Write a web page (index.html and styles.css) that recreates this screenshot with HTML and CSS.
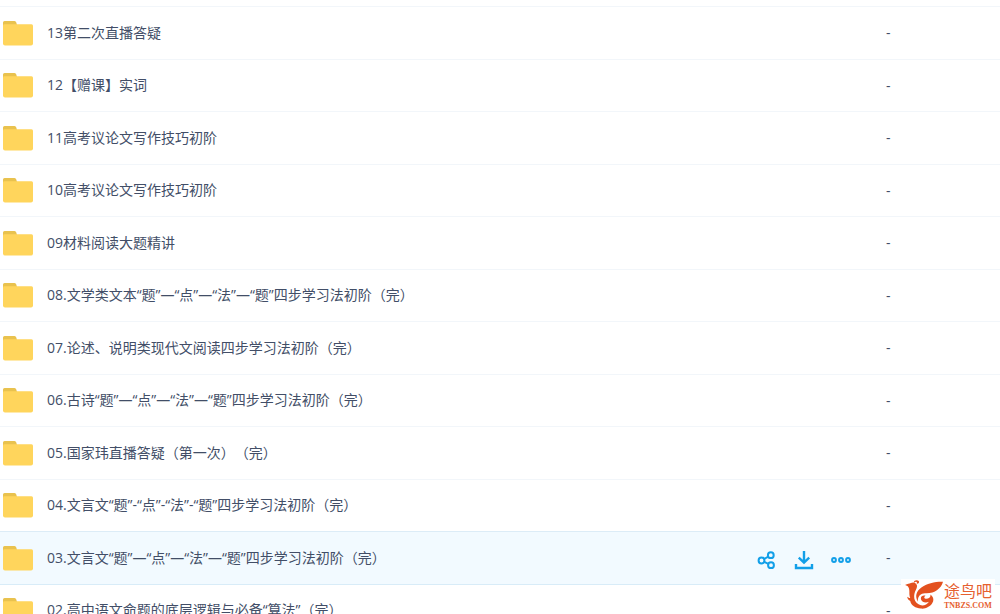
FILE: index.html
```html
<!DOCTYPE html>
<html lang="zh-CN">
<head>
<meta charset="utf-8">
<title>文件列表</title>
<link rel="stylesheet" href="styles.css">
</head>
<body>
<svg class="defs" aria-hidden="true">
  <symbol id="folder" viewBox="0 0 30 25">
    <path d="M0 8V1.500Q0 0 1.500 0H11.500Q13 0 13.300 1.500L14 4V8Z" fill="#e9c24e"/>
    <path d="M0 4.500Q0 3.300 1.500 3.300H28.500Q30 3.300 30 4.800V22.500Q30 24.500 28 24.500H2Q0 24.500 0 22.500Z" fill="#ffd55c"/>
  </symbol>
</svg>
<main class="files">
<table class="list">
<tbody>
<tr class="row"><td class="name"><svg class="folder"><use href="#folder"/></svg><a class="link" href="#">13第二次直播答疑</a></td><td class="actions"></td><td class="size">-</td></tr>
<tr class="row"><td class="name"><svg class="folder"><use href="#folder"/></svg><a class="link" href="#">12【赠课】实词</a></td><td class="actions"></td><td class="size">-</td></tr>
<tr class="row"><td class="name"><svg class="folder"><use href="#folder"/></svg><a class="link" href="#">11高考议论文写作技巧初阶</a></td><td class="actions"></td><td class="size">-</td></tr>
<tr class="row"><td class="name"><svg class="folder"><use href="#folder"/></svg><a class="link" href="#">10高考议论文写作技巧初阶</a></td><td class="actions"></td><td class="size">-</td></tr>
<tr class="row"><td class="name"><svg class="folder"><use href="#folder"/></svg><a class="link" href="#">09材料阅读大题精讲</a></td><td class="actions"></td><td class="size">-</td></tr>
<tr class="row"><td class="name"><svg class="folder"><use href="#folder"/></svg><a class="link" href="#">08.文学类文本“题”—“点”—“法”—“题”四步学习法初阶（完）</a></td><td class="actions"></td><td class="size">-</td></tr>
<tr class="row"><td class="name"><svg class="folder"><use href="#folder"/></svg><a class="link" href="#">07.论述、说明类现代文阅读四步学习法初阶（完）</a></td><td class="actions"></td><td class="size">-</td></tr>
<tr class="row"><td class="name"><svg class="folder"><use href="#folder"/></svg><a class="link" href="#">06.古诗“题”—“点”—“法”—“题”四步学习法初阶（完）</a></td><td class="actions"></td><td class="size">-</td></tr>
<tr class="row"><td class="name"><svg class="folder"><use href="#folder"/></svg><a class="link" href="#">05.国家玮直播答疑（第一次）（完）</a></td><td class="actions"></td><td class="size">-</td></tr>
<tr class="row"><td class="name"><svg class="folder"><use href="#folder"/></svg><a class="link" href="#">04.文言文“题”-“点”-“法”-“题”四步学习法初阶（完）</a></td><td class="actions"></td><td class="size">-</td></tr>
<tr class="row active"><td class="name"><svg class="folder"><use href="#folder"/></svg><a class="link" href="#">03.文言文“题”—“点”—“法”—“题”四步学习法初阶（完）</a></td>
<td class="actions"><div class="tools">
<button class="tool" type="button" aria-label="分享"><svg viewBox="0 0 20 20"><circle cx="4.500" cy="10.500" r="2.900"/><circle cx="13.800" cy="5.200" r="2.900"/><circle cx="14" cy="15.200" r="2.900"/><path d="M7.200 9L11.200 6.700M7.300 11.900L11.300 13.800"/></svg></button>
<button class="tool" type="button" aria-label="下载"><svg viewBox="0 0 20 20"><path d="M10 1V13M4.800 7.700L10 12.700L15.200 7.700M2 14V18H18V14" stroke-width="2.400"/></svg></button>
<button class="tool" type="button" aria-label="更多"><svg viewBox="0 0 20 20"><circle cx="3" cy="10" r="1.900"/><circle cx="10" cy="10" r="1.900"/><circle cx="17" cy="10" r="1.900"/></svg></button>
</div></td><td class="size">-</td></tr>
<tr class="row"><td class="name"><svg class="folder"><use href="#folder"/></svg><a class="link" href="#">02.高中语文命题的底层逻辑与必备“算法”（完）</a></td><td class="actions"></td><td class="size">-</td></tr>
</tbody>
</table>
</main>
<div class="mark">
<svg class="bird" viewBox="0 0 116 88" aria-hidden="true">
  <path d="M0 15C8 11 13 12 18 9C25 5 34 8 36 15C39 23 31 31 29 41C26 54 29 67 40 73C51 81 66 77 73 66C65 70 52 69 49 59C46 49 56 45 63 48C58 50 57 56 63 57C74 58 80 50 77 44C86 49 90 60 83 71C76 82 62 89 48 87C33 86 18 77 16 64C9 60 7 55 7 51C10 54 13 55 16 55C12 45 14 36 13 30C12 20 8 18 0 15Z"/>
  <path d="M116 5C95 4 66 10 50 23C34 35 30 49 39 66C39 47 48 41 61 40C89 42 110 27 116 5Z"/>
  <path d="M27 8C26 1 37 -2 42 3C45 8 39 13 35 10C38 8 36 4 33 5C30 6 30 8 27 8Z"/>
</svg>
<div class="brand"><span class="title">途鸟吧</span><span class="site">TNBZS.COM</span></div>
</div>
</body>
</html>
```
FILE: styles.css
```css
* { box-sizing: border-box; }
body {
  margin: 0;
  background: #fff;
  color: #424e67;
  font: 14px/20px "Open Sans", "Noto Sans CJK SC", sans-serif;
  text-spacing-trim: space-all;
}
.defs { position: absolute; width: 0; height: 0; }
.files { height: 100vh; overflow: hidden; padding-top: 6px; }
.list { width: 100%; border-spacing: 0; table-layout: fixed; }
.row { height: 52px; }
.row:nth-child(odd) { height: 53px; }
.row td { padding: 0; border-top: 1px solid #f2f6fa; vertical-align: middle; }
.row .name { padding-left: 3px; white-space: nowrap; }
.folder { width: 30px; height: 25px; margin-right: 14px; vertical-align: middle; }
.link {
  display: inline-block;
  padding-bottom: 1px;
  color: inherit;
  text-decoration: none;
  vertical-align: middle;
}
.actions { width: 130px; }
.size { width: 114px; }
.row.active td { background: #f2faff; border-top-color: #dcecf7; }
.row.active + .row td { border-top-color: #d8ecf8; }
.tools { display: flex; gap: 17px; padding: 4px 0 0 1px; }
.tool {
  display: flex;
  padding: 0;
  border: 0;
  background: none;
  cursor: pointer;
}
.tool svg {
  width: 20px;
  height: 20px;
  fill: none;
  stroke: #129fe8;
  stroke-width: 2;
}
.mark {
  position: fixed;
  right: 5px;
  bottom: 0;
  display: flex;
  gap: 1px;
  padding: 1px 3px 5px 4px;
  background: #fff;
  color: #e6602f;
}
.bird { width: 38px; height: 29px; fill: #e3511f; }
.brand { display: flex; flex-direction: column; justify-content: flex-end; gap: 4px; }
.title { font-size: 16px; line-height: 16px; }
.site { font: bold 8px/6px "Liberation Serif", serif; }
```
